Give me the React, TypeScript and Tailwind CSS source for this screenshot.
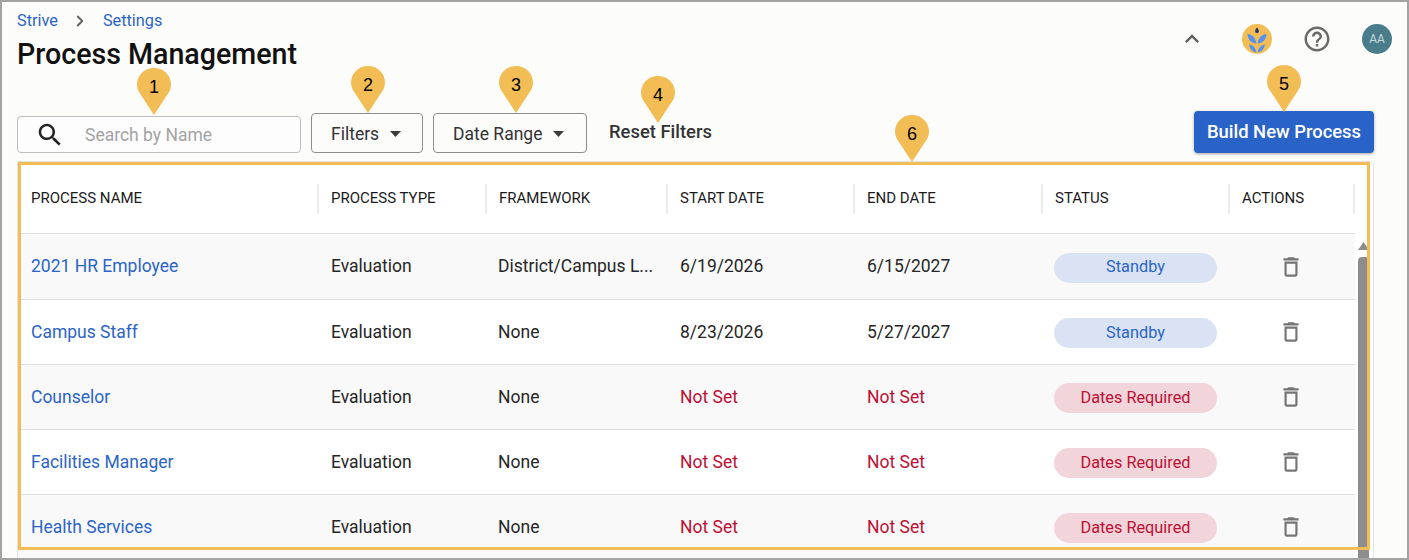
import { ChevronRight } from "lucide-react";

const rows = [
    { name: "2021 HR Employee", framework: "District/Campus L...", start: "6/19/2026", end: "6/15/2027", status: "Standby" },
    { name: "Campus Staff", framework: "None", start: "8/23/2026", end: "5/27/2027", status: "Standby" },
    { name: "Counselor", framework: "None", start: "Not Set", end: "Not Set", status: "Dates Required" },
    { name: "Facilities Manager", framework: "None", start: "Not Set", end: "Not Set", status: "Dates Required" },
    { name: "Health Services", framework: "None", start: "Not Set", end: "Not Set", status: "Dates Required" },
];

const headers = ["PROCESS NAME", "PROCESS TYPE", "FRAMEWORK", "START DATE", "END DATE", "STATUS", "ACTIONS"];

const pins = [
    { label: "1", className: "left-[135px] top-[66px]" },
    { label: "2", className: "left-[349px] top-[64px]" },
    { label: "3", className: "left-[497px] top-[64px]" },
    { label: "4", className: "left-[639px] top-[74px]" },
    { label: "5", className: "left-[1265px] top-[63px]" },
    { label: "6", className: "left-[893px] top-[113px]" },
];

function Pin({ label, className }: { label: string; className: string }) {
    return (
        <div className={`absolute w-[34px] h-[47px] ${className}`}>
            <svg width="34" height="47" viewBox="0 0 34 47" className="absolute inset-0">
                <path d="M17 0C7.6 0 0 7.4 0 16.5c0 3 .9 5.6 2.3 8L17 47l14.7-22.5c1.4-2.4 2.3-5 2.3-8C34 7.4 26.4 0 17 0z" fill="#f3bd55" />
            </svg>
            <span className="absolute inset-x-0 top-[8px] text-center text-[18px] leading-[22px] text-black font-['Liberation_Sans',sans-serif]">{label}</span>
        </div>
    );
}

function Caret() {
    return (
        <svg width="11" height="6" viewBox="0 0 11 6" className="ml-[11px]">
            <path d="M0 0h11L5.5 6z" fill="#3c3c3c" />
        </svg>
    );
}

function TrashIcon() {
    return (
        <svg width="26" height="26" viewBox="0 0 24 24" fill="#757575">
            <path d="M6 19c0 1.1.9 2 2 2h8c1.1 0 2-.9 2-2V7H6v12zM8 9h8v10H8V9zm7.5-5l-1-1h-5l-1 1H5v2h14V4z" />
        </svg>
    );
}

export default function App() {
    return (
        <div className="relative w-[1409px] h-[560px] overflow-hidden bg-[#fcfcfb] border-2 border-[#a3a3a3] font-['Roboto',sans-serif] text-[#262626]">
            {/* Top bar */}
            <div className="flex justify-between pl-[15px] pr-[15px]">
                <div>
                    <div className="flex items-center h-[18px] mt-[10px] text-[16.3px] text-[#2b64c8]">
                        <span>Strive</span>
                        <ChevronRight className="w-[18px] h-[18px] ml-[13px] mr-[14px] text-[#616161]" strokeWidth={2.4} />
                        <span>Settings</span>
                    </div>
                    <h1 className="mt-[6px] text-[28.6px] leading-[36px] font-medium text-[#111]">Process Management</h1>
                </div>
                <div className="flex items-center h-[30px] mt-[22px]">
                    <svg width="28" height="28" viewBox="0 0 24 24" fill="#616161">
                        <path d="M12 8l-6 6 1.41 1.41L12 10.83l4.59 4.58L18 14z" />
                    </svg>
                    <svg width="30" height="30" viewBox="0 0 30 30" className="ml-[36px]">
                        <circle cx="15" cy="15" r="15" fill="#f3bd55" />
                        <path d="M15 3.5c1.2 1.6 1.9 2.7 1.9 3.7a1.9 1.9 0 0 1-3.8 0c0-1 .7-2.1 1.9-3.7z" fill="#27336b" />
                        <path d="M14.4 19.5C9.6 19.5 6 16 5.500 10c4.900.6 8.300 3.800 8.900 9.500zM15.600 19.500c4.800 0 8.400-3.500 8.900-9.500-4.900.6-8.300 3.800-8.900 9.500z" fill="#5691ee" />
                        <path d="M14.400 28.500C10.600 28 8 25.200 7 20.500c4 .5 6.700 3.500 7.400 8zM15.600 28.500c3.800-.5 6.400-3.300 7.400-8-4 .5-6.700 3.500-7.400 8z" fill="#5691ee" />
                    </svg>
                    <svg width="30" height="30" viewBox="0 0 24 24" fill="#6a6a6a" className="ml-[30px]">
                        <path d="M11 18h2v-2h-2v2zm1-16C6.48 2 2 6.48 2 12s4.48 10 10 10 10-4.48 10-10S17.52 2 12 2zm0 18c-4.41 0-8-3.59-8-8s3.59-8 8-8 8 3.59 8 8-3.59 8-8 8zm0-14c-2.21 0-4 1.79-4 4h2c0-1.1.9-2 2-2s2 .9 2 2c0 2-3 1.75-3 5h2c0-2.25 3-2.5 3-5 0-2.21-1.79-4-4-4z" />
                    </svg>
                    <div className="ml-[30px] w-[30px] h-[30px] rounded-full bg-[#4a7d8c] flex items-center justify-center text-[12px] text-[#c9d8dd]">AA</div>
                </div>
            </div>

            {/* Toolbar */}
            <div className="flex items-end mt-[39px] pl-[15px] h-[42px]">
                <div className="flex items-center w-[284px] h-[37px] pt-[1px] rounded-[4px] border border-[#bdbdbd] bg-[#fdfdfd]">
                    <svg width="30" height="30" viewBox="0 0 24 24" fill="#222" className="ml-[17px]">
                        <path d="M15.5 14h-.79l-.28-.27C15.41 12.59 16 11.11 16 9.5 16 5.91 13.09 3 9.5 3S3 5.91 3 9.5 5.91 16 9.5 16c1.61 0 3.09-.59 4.23-1.57l.27.28v.79l5 4.99L20.49 19l-4.99-5zm-6 0C7.01 14 5 11.99 5 9.5S7.01 5 9.5 5 14 7.01 14 9.5 11.99 14 9.5 14z" />
                    </svg>
                    <span className="ml-[20px] text-[17.5px] text-[#a3a3a3]">Search by Name</span>
                </div>
                <button className="flex items-center ml-[10px] w-[112px] h-[40px] pl-[19px] pt-[2px] rounded-[4px] border border-[#8e8e8e] text-[17.5px] text-[#333]">
                    Filters
                    <Caret />
                </button>
                <button className="flex items-center ml-[10px] w-[154px] h-[40px] pl-[19px] pt-[2px] rounded-[4px] border border-[#8e8e8e] text-[17.5px] text-[#333]">
                    Date Range
                    <Caret />
                </button>
                <span className="ml-[22px] mb-[9px] text-[18.4px] leading-[24px] font-medium text-[#333]">Reset Filters</span>
                <button className="ml-auto mr-[33px] w-[180px] h-[42px] rounded-[4px] bg-[#2a63c8] text-[18.4px] font-medium text-white shadow-[0_1px_3px_rgba(0,0,0,0.35)]">
                    Build New Process
                </button>
            </div>

            {/* Table panel */}
            <div className="flex ml-[15px] mr-[33px] mt-[8px] h-[420px] bg-white border border-[#e4e4e4] rounded-tr-[4px] pt-[3px]">
                <div className="w-[1337px] shrink-0">
                    <div className="grid grid-cols-[301px_168px_181px_187px_188px_187px_125px] items-center h-[69px] pb-[1px] border-b border-[#e0e0e0]">
                        {headers.map((h, i) => (
                            <div key={h} className={`flex items-center h-[30px] border-r-2 border-[#ebebeb] text-[15px] text-[#1b1b1b] ${i === 0 ? "pl-[13px]" : "pl-[12px]"}`}>
                                {h}
                            </div>
                        ))}
                    </div>
                    {rows.map((row, i) => (
                        <div key={row.name} className={`grid grid-cols-[301px_168px_181px_187px_188px_187px_125px] items-center border-b border-[#e0e0e0] text-[17.5px] ${i === 0 ? "h-[66px]" : "h-[65px]"} ${i % 2 === 0 ? "bg-[#f9f9f9]" : "bg-white"}`}>
                            <div className="pl-[13px] text-[#2b64c8]">{row.name}</div>
                            <div className="pl-[12px]">Evaluation</div>
                            <div className="pl-[11px]">{row.framework}</div>
                            <div className={`pl-[12px] ${row.start === "Not Set" ? "text-[#bd0f34]" : ""}`}>{row.start}</div>
                            <div className={`pl-[12px] ${row.end === "Not Set" ? "text-[#bd0f34]" : ""}`}>{row.end}</div>
                            <div className="pl-[11px] pt-[2px]">
                                <div className={`flex items-center justify-center w-[163px] h-[30px] rounded-full text-[16.3px] ${row.status === "Standby" ? "bg-[#d9e3f4] text-[#2b64c8]" : "bg-[#f1d5db] text-[#bd0f34]"}`}>
                                    {row.status}
                                </div>
                            </div>
                            <div className="flex justify-center pr-[4px]"><TrashIcon /></div>
                        </div>
                    ))}
                </div>
                {/* Scrollbar */}
                <div className="flex flex-col items-center w-[11px] ml-[3px] pt-[77px]">
                    <svg width="11" height="8" viewBox="0 0 11 8"><path d="M5.5 0L11 8H0z" fill="#8d8d8d" /></svg>
                    <div className="mt-[7px] w-[11px] flex-1 rounded-t-[4px] bg-[#8d8d8d]" />
                </div>
            </div>

            {/* Callout overlays */}
            <div className="absolute left-[16px] top-[160px] w-[1352px] h-[388px] border-[3px] border-[#f3bd55] pointer-events-none" />
            {pins.map((p) => (
                <Pin key={p.label} label={p.label} className={p.className} />
            ))}
        </div>
    );
}
